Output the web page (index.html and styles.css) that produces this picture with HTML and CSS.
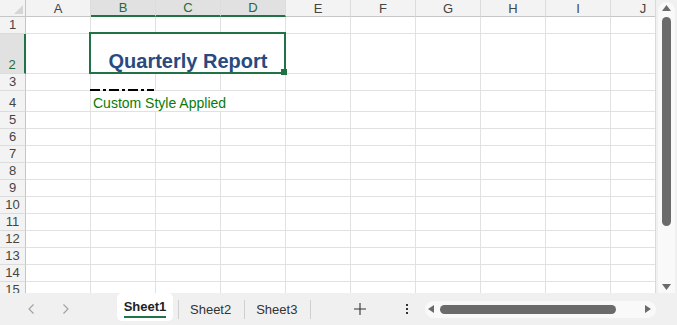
FILE: index.html
```html
<!DOCTYPE html>
<html lang="en">
<head>
    <meta charset="UTF-8">
    <meta name="viewport" content="width=device-width, initial-scale=1.0">
    <title>Quarterly Report - Sheet1</title>
    <link rel="stylesheet" href="styles.css">
</head>
<body>
    <div class="app">
        <div class="workarea">
            <div class="sheet-view">
                <div class="sheet">
                    <!-- column headers -->
                    <div class="corner">
                        <svg width="9" height="9" viewBox="0 0 9 9"><path d="M9 0 L9 9 L0 9 Z" fill="#d6d6d6"/></svg>
                    </div>
                    <div class="col-head">A</div>
                    <div class="col-head sel">B</div>
                    <div class="col-head sel">C</div>
                    <div class="col-head sel">D</div>
                    <div class="col-head">E</div>
                    <div class="col-head">F</div>
                    <div class="col-head">G</div>
                    <div class="col-head">H</div>
                    <div class="col-head">I</div>
                    <div class="col-head">J</div>

                    <!-- row 1 -->
                    <div class="row-head">1</div>
                    <div class="cell"></div><div class="cell"></div><div class="cell"></div><div class="cell"></div><div class="cell"></div>
                    <div class="cell"></div><div class="cell"></div><div class="cell"></div><div class="cell"></div><div class="cell"></div>

                    <!-- row 2 -->
                    <div class="row-head sel">2</div>
                    <div class="cell"></div>
                    <div class="cell title span3">Quarterly Report</div>
                    <div class="cell"></div><div class="cell"></div><div class="cell"></div><div class="cell"></div><div class="cell"></div><div class="cell"></div>

                    <!-- row 3 -->
                    <div class="row-head">3</div>
                    <div class="cell"></div>
                    <div class="cell dash-bottom"></div>
                    <div class="cell"></div><div class="cell"></div><div class="cell"></div><div class="cell"></div>
                    <div class="cell"></div><div class="cell"></div><div class="cell"></div><div class="cell"></div>

                    <!-- row 4 -->
                    <div class="row-head">4</div>
                    <div class="cell"></div>
                    <div class="cell note span3">Custom Style Applied</div>
                    <div class="cell"></div><div class="cell"></div><div class="cell"></div><div class="cell"></div><div class="cell"></div><div class="cell"></div>

                    <!-- rows 5 - 15 -->
                    <div class="row-head">5</div>
                    <div class="cell"></div><div class="cell"></div><div class="cell"></div><div class="cell"></div><div class="cell"></div>
                    <div class="cell"></div><div class="cell"></div><div class="cell"></div><div class="cell"></div><div class="cell"></div>
                    <div class="row-head">6</div>
                    <div class="cell"></div><div class="cell"></div><div class="cell"></div><div class="cell"></div><div class="cell"></div>
                    <div class="cell"></div><div class="cell"></div><div class="cell"></div><div class="cell"></div><div class="cell"></div>
                    <div class="row-head">7</div>
                    <div class="cell"></div><div class="cell"></div><div class="cell"></div><div class="cell"></div><div class="cell"></div>
                    <div class="cell"></div><div class="cell"></div><div class="cell"></div><div class="cell"></div><div class="cell"></div>
                    <div class="row-head">8</div>
                    <div class="cell"></div><div class="cell"></div><div class="cell"></div><div class="cell"></div><div class="cell"></div>
                    <div class="cell"></div><div class="cell"></div><div class="cell"></div><div class="cell"></div><div class="cell"></div>
                    <div class="row-head">9</div>
                    <div class="cell"></div><div class="cell"></div><div class="cell"></div><div class="cell"></div><div class="cell"></div>
                    <div class="cell"></div><div class="cell"></div><div class="cell"></div><div class="cell"></div><div class="cell"></div>
                    <div class="row-head">10</div>
                    <div class="cell"></div><div class="cell"></div><div class="cell"></div><div class="cell"></div><div class="cell"></div>
                    <div class="cell"></div><div class="cell"></div><div class="cell"></div><div class="cell"></div><div class="cell"></div>
                    <div class="row-head">11</div>
                    <div class="cell"></div><div class="cell"></div><div class="cell"></div><div class="cell"></div><div class="cell"></div>
                    <div class="cell"></div><div class="cell"></div><div class="cell"></div><div class="cell"></div><div class="cell"></div>
                    <div class="row-head">12</div>
                    <div class="cell"></div><div class="cell"></div><div class="cell"></div><div class="cell"></div><div class="cell"></div>
                    <div class="cell"></div><div class="cell"></div><div class="cell"></div><div class="cell"></div><div class="cell"></div>
                    <div class="row-head">13</div>
                    <div class="cell"></div><div class="cell"></div><div class="cell"></div><div class="cell"></div><div class="cell"></div>
                    <div class="cell"></div><div class="cell"></div><div class="cell"></div><div class="cell"></div><div class="cell"></div>
                    <div class="row-head">14</div>
                    <div class="cell"></div><div class="cell"></div><div class="cell"></div><div class="cell"></div><div class="cell"></div>
                    <div class="cell"></div><div class="cell"></div><div class="cell"></div><div class="cell"></div><div class="cell"></div>
                    <div class="row-head">15</div>
                    <div class="cell"></div><div class="cell"></div><div class="cell"></div><div class="cell"></div><div class="cell"></div>
                    <div class="cell"></div><div class="cell"></div><div class="cell"></div><div class="cell"></div><div class="cell"></div>
                </div>
            </div>

            <!-- vertical scrollbar -->
            <div class="vscroll">
                <div class="vtrack">
                    <svg class="arrow-up" width="9" height="6" viewBox="0 0 9 6"><path d="M0 6 L4.5 0 L9 6 Z" fill="#6b6b6b"/></svg>
                    <div class="vthumb"></div>
                    <svg class="arrow-down" width="9" height="6" viewBox="0 0 9 6"><path d="M0 0 L9 0 L4.5 6 Z" fill="#6b6b6b"/></svg>
                </div>
            </div>
        </div>

        <!-- sheet tabs -->
        <div class="tabbar">
            <div class="nav">
                <svg width="7" height="10" viewBox="0 0 7 10"><path d="M5.5 0.5 L1 5 L5.5 9.5" fill="none" stroke="#a3a3a3" stroke-width="1.2"/></svg>
                <svg width="7" height="10" viewBox="0 0 7 10"><path d="M1.5 0.5 L6 5 L1.5 9.5" fill="none" stroke="#a3a3a3" stroke-width="1.2"/></svg>
            </div>
            <div class="tab active"><span>Sheet1</span></div>
            <div class="tab">Sheet2</div>
            <div class="tab">Sheet3</div>
            <div class="tab-sep"></div>
            <svg class="add" width="12" height="12" viewBox="0 0 12 12"><path d="M6 0 V12 M0 6 H12" stroke="#333" stroke-width="1.1"/></svg>
            <div class="kebab"><i></i><i></i><i></i></div>
            <div class="hscroll">
                <svg width="6" height="8" viewBox="0 0 6 8"><path d="M6 0 L6 8 L0 4 Z" fill="#6b6b6b"/></svg>
                <div class="hthumb"></div>
                <svg width="6" height="8" viewBox="0 0 6 8"><path d="M0 0 L6 4 L0 8 Z" fill="#6b6b6b"/></svg>
            </div>
        </div>
    </div>
</body>
</html>
```

FILE: styles.css
```css
/* Spreadsheet window */
* {
    box-sizing: border-box;
}

body {
    margin: 0;
    font-family: "Liberation Sans", Arial, sans-serif;
    background-color: #f0f0f0;
    overflow: hidden;
}

.app {
    width: 677px;
    height: 325px;
    display: flex;
    flex-direction: column;
}

.workarea {
    display: flex;
    height: 293px;
}

.sheet-view {
    width: 656px;
    height: 293px;
    overflow: hidden;
    border-right: 1px solid #dadada;
    background-color: #fff;
}

.sheet {
    display: grid;
    grid-template-columns: 26px repeat(10, 65px);
    grid-template-rows: 17px 17px 40px 17px 21px;
    grid-auto-rows: 17px;
}

/* headers */
.corner,
.col-head,
.row-head {
    background-color: #f3f3f3;
    color: #444;
    font-size: 13px;
    line-height: 15px;
}

.corner {
    border-right: 1px solid #c6c6c6;
    border-bottom: 1px solid #c6c6c6;
    display: flex;
    align-items: flex-end;
    justify-content: flex-end;
    padding: 0 2px 2px 0;
}

.corner svg {
    display: block;
}

.col-head {
    display: flex;
    align-items: flex-end;
    justify-content: center;
    border-right: 1px solid #dcdcdc;
    border-bottom: 1px solid #c6c6c6;
}

.col-head.sel {
    background-color: #e1e1e1;
    color: #1d6b3f;
    border-bottom: 2px solid #217346;
}

.row-head {
    display: flex;
    align-items: flex-end;
    justify-content: center;
    padding-bottom: 1px;
    border-right: 1px solid #c6c6c6;
    border-bottom: 1px solid #dcdcdc;
}

.row-head.sel {
    background-color: #e1e1e1;
    color: #1d6b3f;
    border-right: 2px solid #217346;
}

/* cells */
.cell {
    border-right: 1px solid #e1e1e1;
    border-bottom: 1px solid #e1e1e1;
}

.span3 {
    grid-column: span 3;
}

.title {
    position: relative;
    display: flex;
    align-items: flex-end;
    justify-content: center;
    font-size: 20px;
    font-weight: bold;
    line-height: 23px;
    color: #284a7e;
    white-space: nowrap;
}

/* active selection box */
.title::before {
    content: "";
    position: absolute;
    top: -2px;
    left: -2px;
    right: -1px;
    bottom: -1px;
    border: 2px solid #217346;
    z-index: 1;
}

.title::after {
    content: "";
    position: absolute;
    right: -2px;
    bottom: -2px;
    width: 6px;
    height: 6px;
    background-color: #217346;
    z-index: 2;
}

.dash-bottom {
    position: relative;
}

.dash-bottom::after {
    content: "";
    position: absolute;
    left: -1px;
    right: 1px;
    bottom: -1px;
    height: 2px;
    background: repeating-linear-gradient(to right, #000 0 10px, transparent 10px 13px, #000 13px 16px, transparent 16px 19px);
    z-index: 1;
}

.note {
    display: flex;
    align-items: flex-end;
    padding-left: 2px;
    font-size: 14px;
    line-height: 16px;
    color: #0a7b0a;
    white-space: nowrap;
}

/* vertical scrollbar */
.vscroll {
    width: 21px;
    height: 293px;
    padding: 2px 2px 0 2px;
}

.vtrack {
    height: 100%;
    background-color: #f9f9f9;
    border-radius: 9px 9px 0 0;
    display: flex;
    flex-direction: column;
    align-items: center;
    padding: 3px 0 3px 0;
}

.vtrack svg {
    display: block;
}

.vthumb {
    width: 9px;
    height: 209px;
    margin-top: 6px;
    background-color: #6b6b6b;
    border-radius: 5px;
}

.arrow-down {
    margin-top: auto;
}

/* sheet tabs */
.tabbar {
    height: 32px;
    display: flex;
    align-items: center;
    font-size: 13px;
    color: #333;
}

.nav {
    width: 117px;
    display: flex;
    align-items: center;
    gap: 27px;
    padding-left: 28px;
}

.nav svg {
    display: block;
}

.tab {
    height: 19px;
    line-height: 19px;
    padding: 0 13px 0 11px;
    border-left: 1px solid #cfcfcf;
}

.tab.active {
    align-self: flex-start;
    width: 56px;
    height: 28px;
    margin-right: 5px;
    padding: 6px 0 0 0;
    border-left: none;
    border-radius: 5px;
    background-color: #fff;
    text-align: center;
    font-weight: bold;
    color: #222;
    line-height: 15px;
}

.tab.active span {
    display: inline-block;
    padding-bottom: 2px;
    border-bottom: 2px solid #217346;
}

.tab-sep {
    width: 1px;
    height: 19px;
    background-color: #cfcfcf;
}

.add {
    display: block;
    margin-left: 43px;
}

.kebab {
    margin-left: 40px;
    display: flex;
    flex-direction: column;
    gap: 2px;
}

.kebab i {
    display: block;
    width: 2px;
    height: 2px;
    background-color: #333;
}

.hscroll {
    margin-left: 17px;
    width: 231px;
    height: 17px;
    border-radius: 9px;
    background-color: #f9f9f9;
    display: flex;
    align-items: center;
    padding: 0 5px 0 3px;
}

.hscroll svg {
    display: block;
}

.hthumb {
    width: 176px;
    height: 9px;
    margin-left: 6px;
    margin-right: auto;
    background-color: #6b6b6b;
    border-radius: 5px;
}
```
